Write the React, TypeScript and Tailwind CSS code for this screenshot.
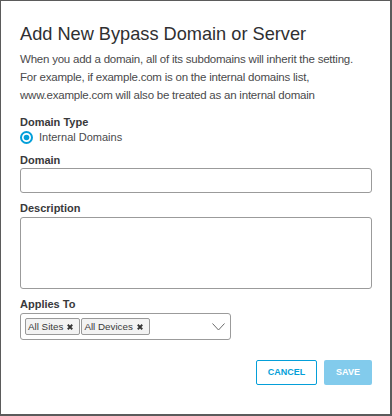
import React from "react";

function XIcon() {
  return (
    <svg width="6" height="6" viewBox="0 0 8 8" className="ml-[4px]">
      <path d="M1 1 L7 7 M7 1 L1 7" stroke="#333" strokeWidth="2.4" strokeLinecap="butt" />
    </svg>
  );
}

function Tag({ label }: { label: string }) {
  return (
    <div className="flex h-[17px] items-center rounded-[2px] border border-[#9a9a9a] bg-[#f3f3f3] pl-[2px] pr-[6px] text-[9.8px] leading-[15px] text-[#3a3a3a]">
      <span>{label}</span>
      <XIcon />
    </div>
  );
}

export default function App() {
  return (
    <div
      className="box-border h-[416px] w-[392px] border-t border-l border-r-2 border-b-2 border-[#5b5b5b] bg-white pl-[19px] pr-[18px] pt-[21px] text-[#3a3a3c]"
      style={{ fontFamily: '"Liberation Sans", Arial, sans-serif' }}
    >
      <h1 className="whitespace-nowrap text-[18.2px] font-normal leading-[24px] text-[#2f2f31]">
        Add New Bypass Domain or Server
      </h1>
      <p className="mt-[4px] whitespace-nowrap text-[11.5px] leading-[18px] tracking-[-0.22px] text-[#4a4a4c]">
        When you add a domain, all of its subdomains will inherit the setting.
        <br />
        For example, if example.com is on the internal domains list,
        <br />
        www.example.com will also be treated as an internal domain
      </p>

      <div className="mt-[11px] text-[11px] font-bold leading-[15px] text-[#39393b]">Domain Type</div>
      <div className="flex h-[14px] items-center">
        <svg width="13" height="13" viewBox="0 0 13 13">
          <circle cx="6.5" cy="6.5" r="5.5" fill="none" stroke="#049fd9" strokeWidth="2" />
          <circle cx="6.5" cy="6.5" r="2.8" fill="#049fd9" />
        </svg>
        <span className="ml-[6px] text-[11px] leading-[14px] text-[#4a4a4c]">Internal Domains</span>
      </div>

      <div className="mt-[8px] text-[11px] font-bold leading-[16px] text-[#39393b]">Domain</div>
      <div className="h-[25px] w-full rounded-[3px] border border-[#9b9b9b]"></div>

      <div className="mt-[7px] text-[11px] font-bold leading-[16px] text-[#39393b]">Description</div>
      <div className="mt-px h-[72px] w-full rounded-[3px] border border-[#9b9b9b]"></div>

      <div className="mt-[7px] text-[11px] font-bold leading-[16px] text-[#39393b]">Applies To</div>
      <div className="mt-[1px] flex h-[27px] w-[211px] items-center rounded-[3px] border border-[#9b9b9b] pl-[4px] pr-[5px]">
        <div className="flex gap-[1px]">
          <Tag label="All Sites" />
          <Tag label="All Devices" />
        </div>
        <svg width="13" height="8" viewBox="0 0 13 8" className="ml-auto">
          <path d="M0.5 0.5 L6.5 7 L12.5 0.5" fill="none" stroke="#6b6b6b" strokeWidth="1" />
        </svg>
      </div>

      <div className="mt-[20px] flex justify-end gap-[7px]">
        <button className="h-[25px] w-[61px] rounded-[2px] border border-[#049fd9] bg-white text-[9px] font-bold text-[#049fd9]">
          CANCEL
        </button>
        <button className="h-[25px] w-[48px] rounded-[2px] bg-[#82cbec] text-[9px] font-bold text-white">
          SAVE
        </button>
      </div>
    </div>
  );
}
